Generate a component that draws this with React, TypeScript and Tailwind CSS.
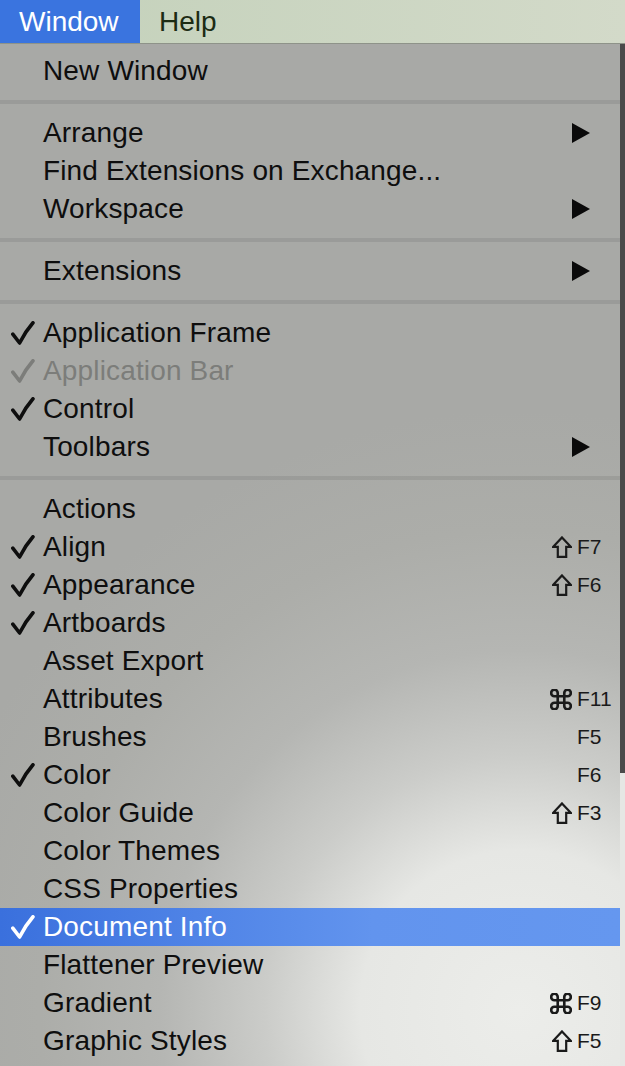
import React from "react"

type Row =
  | { sep: true }
  | {
      sep?: false
      label: string
      check?: "on" | "dim"
      arrow?: boolean
      mod?: "shift" | "cmd"
      shortcut?: string
      disabled?: boolean
      active?: boolean
    }

const rows: Row[] = [
  { label: "New Window" },
  { sep: true },
  { label: "Arrange", arrow: true },
  { label: "Find Extensions on Exchange..." },
  { label: "Workspace", arrow: true },
  { sep: true },
  { label: "Extensions", arrow: true },
  { sep: true },
  { label: "Application Frame", check: "on" },
  { label: "Application Bar", check: "dim", disabled: true },
  { label: "Control", check: "on" },
  { label: "Toolbars", arrow: true },
  { sep: true },
  { label: "Actions" },
  { label: "Align", check: "on", mod: "shift", shortcut: "F7" },
  { label: "Appearance", check: "on", mod: "shift", shortcut: "F6" },
  { label: "Artboards", check: "on" },
  { label: "Asset Export" },
  { label: "Attributes", mod: "cmd", shortcut: "F11" },
  { label: "Brushes", shortcut: "F5" },
  { label: "Color", check: "on", shortcut: "F6" },
  { label: "Color Guide", mod: "shift", shortcut: "F3" },
  { label: "Color Themes" },
  { label: "CSS Properties" },
  { label: "Document Info", check: "on", active: true },
  { label: "Flattener Preview" },
  { label: "Gradient", mod: "cmd", shortcut: "F9" },
  { label: "Graphic Styles", mod: "shift", shortcut: "F5" },
]

function Check({ color }: { color: string }) {
  return (
    <svg width="24" height="24" viewBox="0 0 24 24" fill="none">
      <path
        d="M1.8 13.2 L8.6 22 Q14 11 22 1.8"
        stroke={color}
        strokeWidth="3.6"
        strokeLinecap="round"
        strokeLinejoin="round"
      />
    </svg>
  )
}

function Shift() {
  return (
    <svg width="20" height="22" viewBox="0 0 20 22" fill="none">
      <path
        d="M10 1.4 L18.8 10.8 H14.2 V20.8 H5.8 V10.8 H1.2 Z"
        stroke="#1a1a1a"
        strokeWidth="2.2"
      />
    </svg>
  )
}

function Cmd() {
  return (
    <svg width="22" height="21" viewBox="2.4 2.4 19.2 19.2" fill="none">
      <path
        d="M15 6v12a3 3 0 1 0 3-3H6a3 3 0 1 0 3 3V6a3 3 0 1 0-3 3h12a3 3 0 1 0-3-3"
        stroke="#1a1a1a"
        strokeWidth="2.4"
      />
    </svg>
  )
}

export default function App() {
  return (
    <div
      className="w-[625px] h-[1066px] overflow-hidden flex flex-col bg-[#aaaba8]"
      style={{ fontFamily: '"Liberation Sans", Arial, sans-serif' }}
    >
      <div className="h-[44px] shrink-0 flex items-stretch bg-gradient-to-r from-[#c3d1ba] to-[#d3dac9] border-b border-[#8e9389] text-[28px]">
        <div className="w-[140px] bg-[#3a74df] text-white flex items-center pl-[19px]">Window</div>
        <div className="flex items-center pl-[19px] text-[#1c2b13]">Help</div>
      </div>

      <div className="flex flex-1 min-h-0">
        <div
          className="w-[620px] pt-[8px]"
          style={{
            background:
              "radial-gradient(circle 600px at 520px 966px, #ecedea 0px, #e6e7e4 160px, #cbccc9 255px, #b5b6b3 360px, #acada9 480px, #a8a9a6 600px)",
          }}
        >
          {rows.map((r, i) =>
            r.sep ? (
              <div key={i} className="h-[24px] flex items-center">
                <div className="w-full h-[4px] bg-black/[0.08]" />
              </div>
            ) : (
              <div
                key={i}
                className={
                  "h-[38px] flex items-center text-[28px] tracking-[0.15px] " +
                  (r.active
                    ? "bg-gradient-to-r from-[#3a70dd] via-[#6294ee] via-60% to-[#6597ef] text-white"
                    : r.disabled
                      ? "text-[#7c7d7a]"
                      : "text-[#0e0e0e]")
                }
              >
                <div className="w-[43px] pl-[11px] flex items-center">
                  {r.check && (
                    <Check color={r.active ? "#ffffff" : r.check === "dim" ? "#7c7d7a" : "#0e0e0e"} />
                  )}
                </div>
                <div className="flex-1 whitespace-nowrap">{r.label}</div>
                {r.arrow && (
                  <div className="pr-[30px] flex items-center">
                    <svg width="18" height="20" viewBox="0 0 18 20">
                      <polygon points="0,0 18,10 0,20" fill="#0a0a0a" />
                    </svg>
                  </div>
                )}
                {r.shortcut && (
                  <div className="w-[80px] flex items-end h-[22px] text-[21px] text-[#1a1a1a] leading-none tracking-normal">
                    <div className="w-[32px] flex justify-end items-end">
                      {r.mod === "shift" && <Shift />}
                      {r.mod === "cmd" && <Cmd />}
                    </div>
                    <div className="ml-[5px] pb-[1px]">{r.shortcut}</div>
                  </div>
                )}
              </div>
            ),
          )}
        </div>
        <div className="w-[5px] flex flex-col">
          <div className="h-[729px] bg-[#4a4a4a]" />
          <div className="flex-1 bg-[#e6e7e4]" />
        </div>
      </div>
    </div>
  )
}
